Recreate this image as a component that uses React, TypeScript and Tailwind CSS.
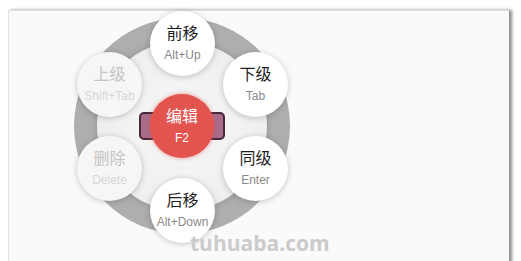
import React from 'react';

type Item = { key: string; title: string; hint: string; x: number; y: number; disabled?: boolean };

// node centres, relative to the 216px ring box
const items: Item[] = [
  { key: 'up', title: '前移', hint: 'Alt+Up', x: 108, y: 25 },
  { key: 'child', title: '下级', hint: 'Tab', x: 181, y: 66 },
  { key: 'sibling', title: '同级', hint: 'Enter', x: 181, y: 150 },
  { key: 'down', title: '后移', hint: 'Alt+Down', x: 108, y: 192 },
  { key: 'del', title: '删除', hint: 'Delete', x: 35, y: 150, disabled: true },
  { key: 'parent', title: '上级', hint: 'Shift+Tab', x: 35, y: 66, disabled: true },
];

const font = { fontFamily: '"Liberation Sans", "Noto Sans CJK SC", sans-serif' };

function Node({ item }: { item: Item }) {
  return (
    <div
      className={`absolute w-[65px] h-[65px] -ml-[32px] -mt-[32px] rounded-full flex flex-col items-center justify-center shadow-[0_1px_6px_rgba(0,0,0,0.22)] ${
        item.disabled ? 'bg-[#f6f6f6]' : 'bg-white'
      }`}
      style={{ left: item.x, top: item.y }}
    >
      <span className={`text-[16px] leading-[20px] ${item.disabled ? 'text-[#c4c4c4]' : 'text-[#1e1e1e]'}`}>{item.title}</span>
      <span className={`text-[12px] leading-[16px] mt-[3px] ${item.disabled ? 'text-[#d6d6d6]' : 'text-[#8a8a8a]'}`}>{item.hint}</span>
    </div>
  );
}

export default function App() {
  return (
    <div className="w-[521px] h-[261px] bg-white overflow-hidden relative" style={font}>
      <div className="ml-[8px] mt-[10px] w-[501px] h-[260px] bg-[#fafafa] border-t border-l border-[#e2e2e2] shadow-[3px_0_3px_rgba(0,0,0,0.45)]">
        {/* radial menu */}
        <div className="relative ml-[65px] mt-[7px] w-[216px] h-[216px] rounded-full bg-[radial-gradient(circle_at_50%_50%,#aeaeae_75%,#9f9f9f_100%)] p-[23px]">
          <div className="w-full h-full rounded-full bg-[radial-gradient(circle_at_50%_50%,#f3f3f3_40%,#e9e9e9_100%)] shadow-[0_0_6px_rgba(0,0,0,0.18)] grid place-items-center">
            {/* centre: edit */}
            <div className="[grid-area:1/1] w-[86px] h-[28px] rounded-[5px] bg-[#a66c8a] border-2 border-[#4b2839]" />
            <div className="[grid-area:1/1] w-[64px] h-[64px] rounded-full bg-[#e3544f] shadow-[0_0_4px_rgba(227,84,79,0.6)] flex flex-col items-center justify-center text-white">
              <span className="text-[16px] leading-[20px]">编辑</span>
              <span className="text-[12px] leading-[16px] mt-[3px]">F2</span>
            </div>
          </div>

          {items.map((it) => (
            <Node key={it.key} item={it} />
          ))}
        </div>
      </div>

      <span
        className="absolute left-[190px] top-[229px] text-[21px] font-bold text-[#cbcbcb] leading-[28px]"
        style={{ fontFamily: '"Open Sans", sans-serif' }}
      >
        tuhuaba.com
      </span>
    </div>
  );
}
